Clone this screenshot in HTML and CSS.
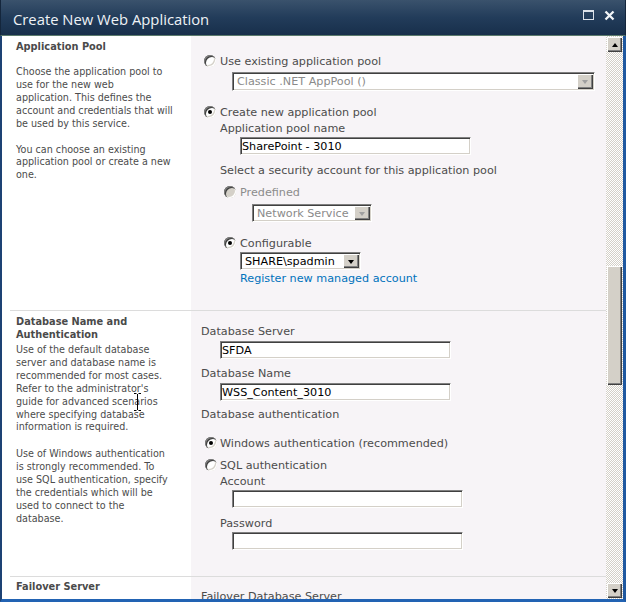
FILE: index.html
```html
<!DOCTYPE html>
<html>
<head>
<meta charset="utf-8">
<title>Create New Web Application</title>
<link rel="stylesheet" href="styles.css">
</head>
<body>
<div class="window">
  <div class="titlebar">
    <span class="title">Create New Web Application</span>
    <span class="tb-icons">
      <svg width="11" height="10" viewBox="0 0 11 10"><rect x="0.5" y="0.5" width="10" height="9" fill="none" stroke="#dbe2ea"/><rect x="0" y="0" width="11" height="2" fill="#dbe2ea"/></svg>
      <svg width="11" height="11" viewBox="0 0 11 11"><path d="M1.5 1.5 L9.5 9.5 M9.5 1.5 L1.5 9.5" stroke="#f2f5f8" stroke-width="2.3"/></svg>
    </span>
  </div>
  <div class="frame">
    <div class="content">
      <section class="row">
        <div class="desc desc-pool">
          <h3>Application Pool</h3>
          <p class="p-first">Choose the application pool to<br>use for the new web<br>application. This defines the<br>account and credentials that will<br>be used by this service.</p>
          <p>You can choose an existing<br>application pool or create a new<br>one.</p>
        </div>
        <div class="fields fields-pool">
          <div class="radio-row ml-13"><span class="radio"></span><span class="txt">Use existing application pool</span></div>
          <div class="select select-wide dis mt-3 ml-41"><span class="val">Classic .NET AppPool ()</span><span class="btn"></span></div>
          <div class="radio-row ml-13 mt-13"><span class="radio on"></span><span class="txt">Create new application pool</span></div>
          <div class="label ml-29">Application pool name</div>
          <input class="textbox mt-1 ml-49" type="text" value="SharePoint - 3010">
          <div class="label ml-29 mt-7">Select a security account for this application pool</div>
          <div class="radio-row ml-33 mt-6 disabled"><span class="radio dis"></span><span class="txt">Predefined</span></div>
          <div class="select select-net dis mt-4 ml-61"><span class="val">Network Service</span><span class="btn"></span></div>
          <div class="radio-row ml-33 mt-13"><span class="radio on"></span><span class="txt">Configurable</span></div>
          <div class="select select-acct mt-1 ml-49"><span class="val">SHARE\spadmin</span><span class="btn"></span></div>
          <a class="link ml-49" href="#">Register new managed account</a>
        </div>
      </section>
      <div class="sep"></div>
      <section class="row">
        <div class="desc desc-db">
          <h3 class="h-tight">Database Name and<br>Authentication</h3>
          <p class="p-close">Use of the default database<br>server and database name is<br>recommended for most cases.<br>Refer to the administrator's<br>guide for advanced scenarios<br>where specifying database<br>information is required.</p>
          <p class="p-gap">Use of Windows authentication<br>is strongly recommended. To<br>use SQL authentication, specify<br>the credentials which will be<br>used to connect to the<br>database.</p>
        </div>
        <div class="fields fields-db">
          <div class="label ml-10">Database Server</div>
          <input class="textbox mt-2 ml-29" type="text" value="SFDA">
          <div class="label ml-10 mt-6">Database Name</div>
          <input class="textbox mt-2 ml-29" type="text" value="WSS_Content_3010">
          <div class="label ml-10 mt-5">Database authentication</div>
          <div class="radio-row gap-3 ml-14 mt-13"><span class="radio on"></span><span class="txt">Windows authentication (recommended)</span></div>
          <div class="radio-row gap-3 ml-14 mt-6"><span class="radio"></span><span class="txt">SQL authentication</span></div>
          <div class="label ml-29">Account</div>
          <input class="textbox mt-1 ml-41" type="text" value="">
          <div class="label ml-29 mt-7">Password</div>
          <input class="textbox mt-1 ml-41" type="password" value="">
        </div>
      </section>
      <div class="sep"></div>
      <section class="row">
        <div class="desc desc-fail">
          <h3>Failover Server</h3>
        </div>
        <div class="fields fields-fail">
          <div class="label ml-10">Failover Database Server</div>
        </div>
      </section>
    </div>
    <div class="scrollbar">
      <div class="sb-btn up"><span class="arrow-up"></span></div>
      <div class="sb-thumb"></div>
      <div class="sb-btn down"><span class="arrow-down"></span></div>
    </div>
  </div>
  <svg class="cursor" width="9" height="18" viewBox="0 0 9 18"><path d="M1 0.5 H3.5 M5.5 0.5 H8 M4.5 1 V17 M1 17.5 H3.5 M5.5 17.5 H8" stroke="#000" stroke-width="1" fill="none"/></svg>
</div>
</body>
</html>
```
FILE: styles.css
```css
html, body {
  margin: 0;
  padding: 0;
  overflow: hidden;
}
body {
  width: 626px;
  height: 602px;
  font-family: "DejaVu Sans", Verdana, sans-serif;
  background: #fff;
}
.window {
  position: relative;
  width: 626px;
  height: 602px;
  display: flex;
  flex-direction: column;
}
.titlebar {
  height: 35px;
  flex: none;
  display: flex;
  align-items: center;
  padding: 0 10px 0 12px;
  background: linear-gradient(#3a526c, #223c5a 50%, #182f4b);
  border-bottom: 1px solid #5b7a6c;
  border-left: 1px solid #14263c;
  border-right: 1px solid #14263c;
}
.title {
  flex: 1;
  font-family: "Open Sans", "Liberation Sans", sans-serif;
  font-size: 14.8px;
  color: #eef2f6;
  line-height: 20px;
  margin-top: 2px;
}
.tb-icons {
  display: flex;
  gap: 10px;
  align-items: flex-start;
  align-self: flex-start;
  margin-top: 10px;
}
.frame {
  flex: 1;
  min-height: 0;
  display: flex;
  border-left: 2px solid #1d4274;
  border-right: 3px solid #1f58a0;
  border-bottom: 3px solid #2263b3;
}
.content {
  flex: 1;
  overflow: hidden;
  background: linear-gradient(to right, #ffffff 189px, #f7f4f7 189px);
}
.row {
  display: flex;
}
.desc {
  width: 189px;
  flex: none;
  box-sizing: border-box;
  padding-left: 14px;
  color: #4c4c4c;
  font-size: 9.6px;
  line-height: 12.9px;
}
.desc h3 {
  margin: 0;
  font-size: 9.8px;
  font-weight: bold;
  line-height: 13px;
  color: #4a4a4a;
}
.desc h3.h-tight {
  line-height: 12.5px;
}
.desc p {
  margin: 13px 0 0;
}
.desc p.p-close {
  margin-top: 3px;
}
.desc p.p-gap {
  margin-top: 14px;
}
.desc-pool { padding-top: 4px; }
.desc-db { padding-top: 5px; }
.desc-fail { padding-top: 3px; }

.fields {
  flex: 1;
  font-size: 11.2px;
  line-height: 16px;
  color: #4c4c4c;
  display: flex;
  flex-direction: column;
  align-items: flex-start;
}
.fields-pool { padding: 17px 0 24px; }
.fields-db { padding: 12px 0 26px; }
.fields-fail { padding-top: 11px; }

.sep {
  height: 1px;
  margin-left: 8px;
  background: #dcdcdc;
}

.label {
  height: 16px;
  line-height: 18px;
  white-space: nowrap;
}

.radio-row {
  display: flex;
  align-items: center;
  gap: 4px;
  height: 16px;
  white-space: nowrap;
}
.radio-row .txt {
  margin-top: 2px;
}
.radio-row.gap-3 { gap: 3px; }
.radio-row.disabled { color: #8c8c8c; }

.radio {
  width: 12px;
  height: 12px;
  flex: none;
  border-radius: 50%;
  background: #fff;
  display: flex;
  align-items: center;
  justify-content: center;
  margin-top: -1px;
  box-shadow: inset 1px 1px 0 #808080, inset 2px 2px 0 #404040, inset -1px -1px 0 #ffffff, inset -2px -2px 0 #d4d0c8;
}
.radio.on::after {
  content: "";
  width: 4px;
  height: 4px;
  border-radius: 50%;
  background: #000;
}
.radio.dis {
  background: #d4d0c8;
}

.textbox {
  box-sizing: border-box;
  width: 231px;
  height: 18px;
  margin: 0;
  padding: 0 1px;
  border: 1px solid;
  border-color: #808080 #ffffff #ffffff #808080;
  box-shadow: inset 1px 1px 0 #404040, inset -1px -1px 0 #d4d0c8;
  background: #fff;
  font-family: "DejaVu Sans", Verdana, sans-serif;
  font-size: 11.2px;
  color: #000;
  outline: none;
}

.select {
  box-sizing: border-box;
  display: flex;
  align-items: stretch;
  height: 18px;
  padding: 1px;
  border: 1px solid;
  border-color: #808080 #ffffff #ffffff #808080;
  box-shadow: inset 1px 1px 0 #404040, inset -1px -1px 0 #d4d0c8;
  background: #fff;
  color: #000;
  font-size: 11.2px;
  line-height: 15px;
}
.select .val {
  flex: 1;
  padding-left: 3px;
  white-space: nowrap;
  overflow: hidden;
}
.select.dis .val { color: #8a8a8a; }
.select .btn {
  width: 16px;
  flex: none;
  background: #d4d0c8;
  display: flex;
  align-items: center;
  justify-content: center;
  box-shadow: inset 1px 1px 0 #ffffff, inset -1px -1px 0 #404040, inset -2px -2px 0 #808080;
}
.select .btn::after {
  content: "";
  width: 0;
  height: 0;
  border-left: 3.5px solid transparent;
  border-right: 3.5px solid transparent;
  border-top: 4px solid #000;
  margin-top: 1px;
}
.select.dis .btn::after {
  border-top-color: #a0a0a0;
}
.select-wide { width: 363px; height: 19px; line-height: 16px; }
.select-net { width: 120px; }
.select-acct { width: 121px; }

.link {
  color: #0072bc;
  text-decoration: none;
  height: 16px;
  line-height: 18px;
  white-space: nowrap;
}

.ml-10 { margin-left: 10px; }
.ml-13 { margin-left: 13px; }
.ml-14 { margin-left: 14px; }
.ml-29 { margin-left: 29px; }
.ml-33 { margin-left: 33px; }
.ml-41 { margin-left: 41px; }
.ml-49 { margin-left: 49px; }
.ml-61 { margin-left: 61px; }
.mt-1 { margin-top: 1px; }
.mt-2 { margin-top: 2px; }
.mt-3 { margin-top: 3px; }
.mt-4 { margin-top: 4px; }
.mt-5 { margin-top: 5px; }
.mt-6 { margin-top: 6px; }
.mt-7 { margin-top: 7px; }
.mt-13 { margin-top: 13px; }

.scrollbar {
  width: 17px;
  flex: none;
  display: flex;
  flex-direction: column;
  padding: 1px 0;
  box-sizing: border-box;
  background-color: #fff;
  background-image: conic-gradient(#d4d0c8 25%, #ffffff 0 50%, #d4d0c8 0 75%, #ffffff 0);
  background-size: 2px 2px;
}
.sb-btn, .sb-thumb {
  background: #d4d0c8;
  box-shadow: inset 1px 1px 0 #ffffff, inset -1px -1px 0 #404040, inset -2px -2px 0 #808080;
  margin: 0 1px;
}
.sb-btn {
  height: 15px;
  flex: none;
  display: flex;
  align-items: center;
  justify-content: center;
}
.sb-btn.down { margin-top: auto; }
.sb-thumb {
  margin-top: 214px;
  height: 119px;
  flex: none;
}
.arrow-up {
  width: 0;
  height: 0;
  border-left: 3.5px solid transparent;
  border-right: 3.5px solid transparent;
  border-bottom: 4px solid #000;
}
.arrow-down {
  width: 0;
  height: 0;
  border-left: 3.5px solid transparent;
  border-right: 3.5px solid transparent;
  border-top: 4px solid #000;
}

.cursor {
  position: absolute;
  left: 133px;
  top: 393px;
}
```
